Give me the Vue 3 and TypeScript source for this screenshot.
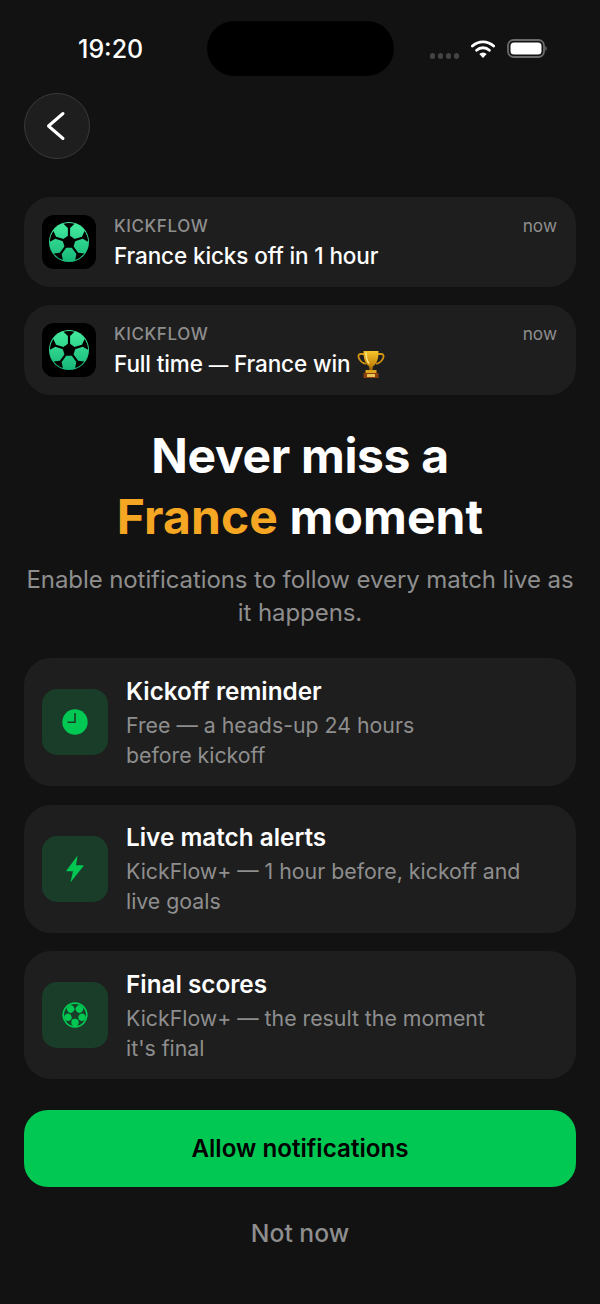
<script setup lang="ts">
const spokes = [0, 72, 144, 216, 288]
const hexes = [36, 108, 180, 252, 324]
const notes = [
  { id: 1, before: 'France kicks off in 1 hour', dash: '', after: '', trophy: false },
  { id: 2, before: 'Full time ', dash: '—', after: ' France win', trophy: true },
]
const features = [
  { id: 'clock', title: 'Kickoff reminder', lines: ['Free — a heads-up 24 hours', 'before kickoff'] },
  { id: 'bolt', title: 'Live match alerts', lines: ['KickFlow+ — 1 hour before, kickoff and', 'live goals'] },
  { id: 'ball', title: 'Final scores', lines: ['KickFlow+ — the result the moment', "it's final"] },
]
</script>

<template>
  <main class="screen">
    <header class="status">
      <span class="time">19:20</span>
      <div class="island"></div>
      <div class="status-right">
        <div class="dots"><i></i><i></i><i></i><i></i></div>
        <svg class="wifi" width="24" height="18" viewBox="0 0 24 18">
          <path d="M1.4 6a15.500 15.500 0 0 1 21.200 0" fill="none" stroke="#fff" stroke-width="2.800" stroke-linecap="round" />
          <path d="M5.600 10.300a9.300 9.300 0 0 1 12.800 0" fill="none" stroke="#fff" stroke-width="2.800" stroke-linecap="round" />
          <path d="M12 18l-3.700-4a5.300 5.300 0 0 1 7.400 0z" fill="#fff" />
        </svg>
        <svg class="battery" width="40" height="19" viewBox="0 0 40 19">
          <rect x="1" y="1" width="36" height="17" rx="5.500" fill="none" stroke="#6a6a6a" stroke-width="1.800" />
          <rect x="3.500" y="3.500" width="31" height="12" rx="3.500" fill="#fff" />
          <path d="M38.300 7v5a2.800 2.800 0 0 0 1.500-2.500 2.800 2.800 0 0 0-1.500-2.500z" fill="#6a6a6a" />
        </svg>
      </div>
    </header>

    <button class="back" aria-label="Back">
      <svg width="22" height="32" viewBox="0 0 22 32">
        <path d="M17 3.500L2.500 16L17 28.500" fill="none" stroke="#fff" stroke-width="3" stroke-linecap="round" stroke-linejoin="round" />
      </svg>
    </button>

    <section class="notes">
      <article v-for="n in notes" :key="n.id" class="note">
        <div class="app-icon">
          <svg width="42" height="42" viewBox="-21 -21 42 42">
            <defs>
              <linearGradient :id="'g' + n.id" x1="0" y1="0" x2="0" y2="1">
                <stop offset="0" stop-color="#44ec9f" />
                <stop offset="1" stop-color="#16b878" />
              </linearGradient>
            </defs>
            <circle r="20" :fill="'url(#g' + n.id + ')'" />
            <polygon points="0,-7 6.700,-2.200 4.100,5.700 -4.100,5.700 -6.700,-2.200" fill="#000" />
            <g v-for="a in spokes" :key="a" :transform="'rotate(' + a + ')'">
              <path d="M-1.100 -6L-1.100 -14L-5.600 -18.200A19 19 0 0 1 5.600 -18.200L1.100 -14L1.100 -6z" fill="#000" />
            </g>
          </svg>
        </div>
        <div class="note-body">
          <div class="note-top">
            <span class="app-name">KICKFLOW</span>
            <span class="when">now</span>
          </div>
          <div class="note-title">
            <span>{{ n.before }}<span v-if="n.dash" class="dash">{{ n.dash }}</span>{{ n.after }}</span>
            <svg v-if="n.trophy" class="trophy" width="28" height="29" viewBox="0 0 28 29">
              <defs>
                <linearGradient id="gold" x1="0" y1="0" x2="0" y2="1">
                  <stop offset="0" stop-color="#f6c52c" />
                  <stop offset="0.7" stop-color="#c98a0c" />
                  <stop offset="1" stop-color="#8f5a08" />
                </linearGradient>
              </defs>
              <path d="M7 4H3.500C1.500 4 1 6 1.800 8c1 2.600 3.600 5 7 6M21 4h3.500c2 0 2.500 2 1.700 4-1 2.600-3.600 5-7 6" fill="none" stroke="#d3960f" stroke-width="1.800" />
              <path d="M6.500 1h15c0 7-1 12.500-5.600 15.500l-.4 4h-3l-.4-4C7.500 13.500 6.500 8 6.500 1z" fill="url(#gold)" />
              <path d="M9 2.500c0 4.500 1 8.500 3 11" fill="none" stroke="#ffe98a" stroke-width="1.400" />
              <rect x="8.500" y="20" width="11" height="3" fill="#e0a51f" />
              <rect x="6.500" y="23" width="15" height="5" fill="#8a3f0c" />
              <rect x="10" y="24" width="8" height="3" fill="#e9c35a" />
            </svg>
          </div>
        </div>
      </article>
    </section>

    <section class="hero">
      <h1>
        <span class="line-a">Never miss a</span>
        <span class="line-b"><span class="accent">France</span> moment</span>
      </h1>
      <p>Enable notifications to follow every match live as<br />it happens.</p>
    </section>

    <section class="features">
      <article v-for="f in features" :key="f.id" class="feature">
        <div class="feature-icon">
          <svg v-if="f.id === 'clock'" width="26" height="26" viewBox="0 0 26 26">
            <circle cx="13" cy="13" r="12.700" fill="#00c853" />
            <path d="M13 4v9.300H5.500" fill="none" stroke="#1a3d29" stroke-width="1.600" />
          </svg>
          <svg v-else-if="f.id === 'bolt'" width="18" height="28" viewBox="0 0 18 28">
            <path d="M11.600 0.500L0.500 15.500a0.500 0.500 0 0 0 0.500 0.800H7L4.400 27.500 17.500 11a0.500 0.500 0 0 0-0.400-0.800H10z" fill="#00c853" />
          </svg>
          <svg v-else width="26" height="26" viewBox="-13 -13 26 26">
            <circle r="11.800" fill="none" stroke="#00c853" stroke-width="1.700" />
            <circle v-for="a in hexes" :key="a" r="3.700" cy="-7.400" fill="#00c853" :transform="'rotate(' + a + ')'" />
          </svg>
        </div>
        <div class="feature-body">
          <h2>{{ f.title }}</h2>
          <p>{{ f.lines[0] }}<br />{{ f.lines[1] }}</p>
        </div>
      </article>
    </section>

    <button class="allow">Allow notifications</button>
    <button class="later">Not now</button>
  </main>
</template>

<style scoped>
.screen {
  box-sizing: border-box;
  width: 600px;
  height: 1304px;
  padding: 0 24px;
  background: #121212;
  color: #fff;
  font-family: Inter, "Liberation Sans", sans-serif;
  overflow: hidden;
  display: flex;
  flex-direction: column;
}
.status {
  position: relative;
  height: 93px;
  flex: none;
  display: flex;
  justify-content: space-between;
}
.time {
  margin: 34px 0 0 54px;
  font-size: 25px;
  line-height: 30px;
  font-weight: 500;
}
.island {
  position: absolute;
  left: 183px;
  top: 21px;
  width: 187px;
  height: 55px;
  border-radius: 28px;
  background: #000;
}
.status-right {
  display: flex;
  align-items: flex-start;
  gap: 12px;
  margin-right: 29px;
}
.dots {
  display: flex;
  gap: 2.500px;
  margin-top: 53px;
}
.dots i {
  width: 5.500px;
  height: 5.500px;
  border-radius: 50%;
  background: #444;
}
.wifi {
  margin-top: 40px;
}
.battery {
  margin-top: 39px;
}
.back {
  width: 66px;
  height: 66px;
  flex: none;
  padding: 0;
  border: 1.500px solid #3a3a3a;
  border-radius: 50%;
  background: #1e1e1e;
  display: flex;
  align-items: center;
  justify-content: center;
}
.notes {
  margin-top: 38px;
  display: flex;
  flex-direction: column;
  gap: 18px;
}
.note {
  height: 90px;
  box-sizing: border-box;
  padding: 18px;
  border-radius: 27px;
  background: #1e1e1e;
  display: flex;
  gap: 18px;
}
.app-icon {
  width: 54px;
  height: 54px;
  flex: none;
  border-radius: 12px;
  background: #000;
  display: flex;
  align-items: center;
  justify-content: center;
}
.note-body {
  flex: 1;
  min-width: 0;
  margin-top: -1px;
}
.note-top {
  display: flex;
  justify-content: space-between;
  align-items: center;
  height: 24px;
}
.app-name {
  font-size: 17px;
  font-weight: 500;
  letter-spacing: 0.6px;
  color: #8e8e8e;
}
.when {
  font-size: 17.250px;
  color: #8e8e8e;
  margin: -2px 1px 0 0;
}
.note-title {
  margin-top: 3px;
  font-size: 22.500px;
  line-height: 30px;
  font-weight: 500;
  letter-spacing: -0.12px;
  display: flex;
  align-items: center;
  gap: 7px;
  white-space: pre;
}
.dash {
  font-size: 19.500px;
}
.trophy {
  flex: none;
  margin-top: -1px;
}
.hero {
  margin-top: 30px;
  text-align: center;
}
h1 {
  margin: 0;
  font-size: 48px;
  line-height: 61px;
  font-weight: 700;
}
.line-a,
.line-b {
  display: block;
}
.line-a {
  letter-spacing: -0.35px;
}
.line-b {
  letter-spacing: 0.1px;
}
.accent {
  color: #f5a623;
}
.hero p {
  margin: 16px 0 0;
  font-size: 24px;
  line-height: 33px;
  letter-spacing: -0.08px;
  color: #8e8e8e;
  white-space: nowrap;
}
.features {
  margin-top: 29px;
  display: flex;
  flex-direction: column;
  gap: 18.500px;
}
.feature {
  height: 128px;
  box-sizing: border-box;
  padding: 0 18px;
  border-radius: 27px;
  background: #1e1e1e;
  display: flex;
  align-items: center;
  gap: 18px;
}
.feature-icon {
  width: 66px;
  height: 66px;
  flex: none;
  border-radius: 15px;
  background: #1a3d29;
  display: flex;
  align-items: center;
  justify-content: center;
}
.feature-body {
  min-width: 0;
}
h2 {
  margin: 0;
  font-size: 24.300px;
  line-height: 33px;
  font-weight: 600;
}
.feature-body p {
  margin: 2px 0 0;
  font-size: 21.300px;
  line-height: 30px;
  color: #8e8e8e;
}
.allow {
  margin-top: 31px;
  height: 77px;
  flex: none;
  border: 0;
  border-radius: 24px;
  background: #00c853;
  color: #000;
  font-family: inherit;
  font-size: 24.200px;
  font-weight: 600;
}
.later {
  margin-top: 18px;
  padding: 0;
  height: 56px;
  flex: none;
  border: 0;
  background: none;
  color: #8e8e8e;
  font-family: inherit;
  font-size: 24.700px;
  font-weight: 500;
}
</style>
